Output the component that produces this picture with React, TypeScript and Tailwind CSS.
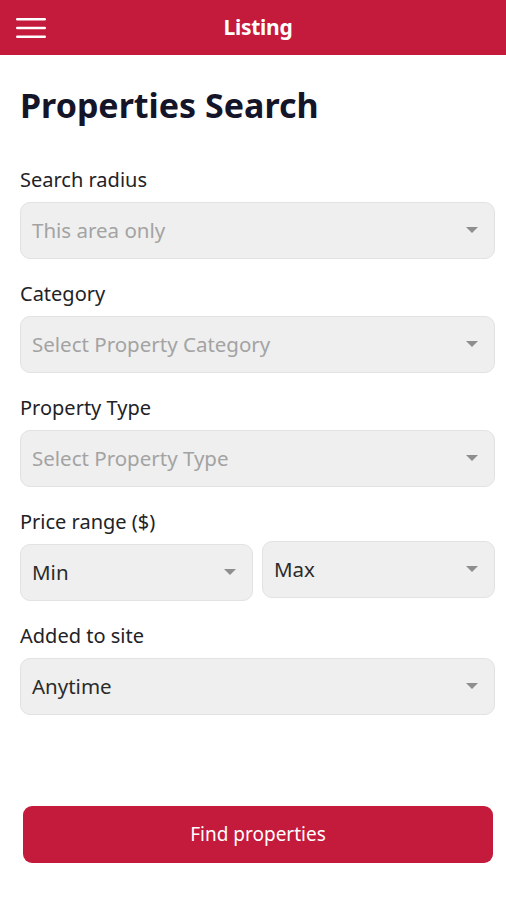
function Caret() {
  return (
    <svg width="12" height="7" viewBox="0 0 12 7" className="shrink-0">
      <path d="M0 0h12L6 6z" fill="#8e8e8e" />
    </svg>
  );
}

function Hamburger() {
  return (
    <svg width="30" height="22" viewBox="0 0 30 22" className="absolute left-[16px] top-[17px]">
      <rect x="0" y="1" width="30" height="2.6" rx="1.3" fill="white" />
      <rect x="0" y="9.7" width="30" height="2.6" rx="1.3" fill="white" />
      <rect x="0" y="18.4" width="30" height="2.6" rx="1.3" fill="white" />
    </svg>
  );
}

interface SelectBoxProps {
  value: string;
  placeholder?: boolean;
  className?: string;
}

function SelectBox({ value, placeholder, className = "" }: SelectBoxProps) {
  return (
    <div
      className={`flex h-[57px] items-center justify-between rounded-[10px] border border-[#e2e2e2] bg-[#efefef] pl-[11px] pr-[16px] ${className}`}
    >
      <span className={`text-[20.5px] ${placeholder ? "text-[#a3a3a3]" : "text-[#2b2b2b]"}`}>{value}</span>
      <Caret />
    </div>
  );
}

function Field({ label, children }: { label: string; children: React.ReactNode }) {
  return (
    <div className="flex flex-col">
      <label className="mb-[10px] text-[20px] leading-[24px] text-[#222226]">{label}</label>
      {children}
    </div>
  );
}

export default function App() {
  return (
    <div className="flex h-[900px] w-[506px] flex-col bg-white" style={{ fontFamily: "'Noto Sans', sans-serif" }}>
      {/* Header */}
      <div className="relative flex h-[55px] items-center justify-center bg-[#c41a3b] pl-[10px]">
        <Hamburger />
        <span className="text-[21px] font-bold tracking-[-0.3px] text-white">Listing</span>
      </div>

      <div className="flex flex-1 flex-col pl-[20px] pr-[11px]">
        <h1 className="mt-[28px] mb-[41px] text-[34px] font-bold leading-[44px] text-[#15152a]">
          Properties Search
        </h1>

        <div className="flex flex-col gap-[23px]">
          <Field label="Search radius">
            <SelectBox value="This area only" placeholder />
          </Field>
          <Field label="Category">
            <SelectBox value="Select Property Category" placeholder />
          </Field>
          <Field label="Property Type">
            <SelectBox value="Select Property Type" placeholder />
          </Field>
          <Field label="Price range ($)">
            <div className="-mt-[3px] flex items-start gap-[9px]">
              <SelectBox value="Min" className="mt-[3px] flex-1" />
              <SelectBox value="Max" className="flex-1" />
            </div>
          </Field>
          <Field label="Added to site">
            <SelectBox value="Anytime" />
          </Field>
        </div>

        <button className="ml-[3px] mr-[2px] mt-[91px] flex h-[57px] items-center justify-center rounded-[9px] bg-[#c41a3b] text-[19px] text-white">
          Find properties
        </button>
      </div>
    </div>
  );
}
